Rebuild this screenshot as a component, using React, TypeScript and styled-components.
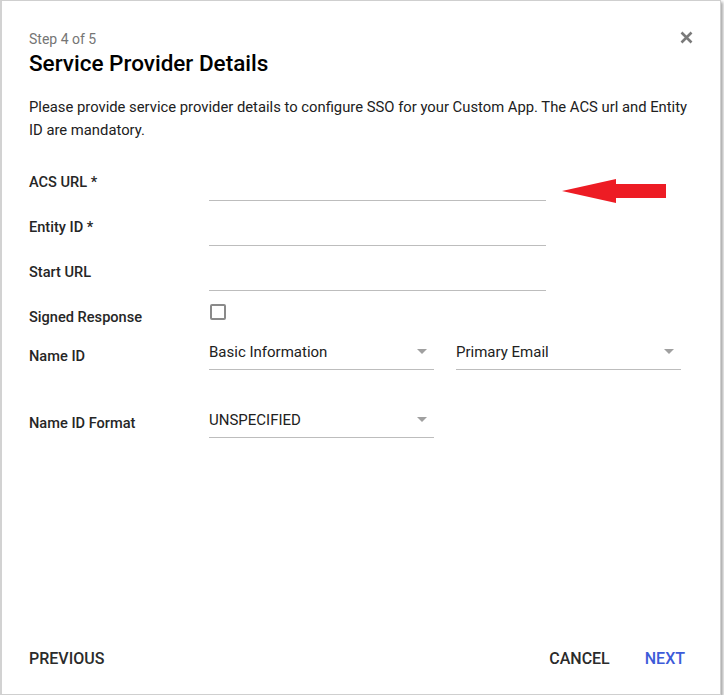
import React from 'react';
import styled, { createGlobalStyle } from 'styled-components';

const GlobalStyle = createGlobalStyle`
  html, body {
    margin: 0;
    padding: 0;
    background: #ffffff;
  }
  body {
    font-family: Roboto, "Liberation Sans", Arial, sans-serif;
    color: #212121;
  }
`;

const Dialog = styled.div`
  position: relative;
  box-sizing: border-box;
  width: 721px;
  height: 695px;
  border: 1px solid #cfcfcf;
  border-left: 2px solid #d2d2d2;
  background: #ffffff;
  box-shadow: 2px 2px 3px rgba(0, 0, 0, 0.35);
  display: flex;
  flex-direction: column;
  padding: 28px 27px 0 27px;
`;

const Header = styled.div`
  display: flex;
  justify-content: space-between;
  align-items: flex-start;
`;

const Step = styled.div`
  font-size: 14px;
  line-height: 20px;
  color: #757575;
`;

const Title = styled.h1`
  margin: 0;
  font-size: 22.5px;
  line-height: 28px;
  font-weight: 500;
  color: #000000;
`;

const CloseButton = styled.button`
  border: 0;
  background: none;
  padding: 0;
  margin: 2px -1px 0 0;
  width: 14px;
  height: 14px;
  cursor: pointer;
  display: flex;
`;

const Description = styled.p`
  margin: 19px 0 0 0;
  font-size: 14.8px;
  line-height: 23px;
  color: #212121;
`;

const Form = styled.div`
  margin-top: 15px;
  display: flex;
  flex-direction: column;
`;

const Row = styled.div<{ $h: number }>`
  display: grid;
  grid-template-columns: 180px auto;
  align-items: end;
  height: ${(p) => p.$h}px;
`;

const Label = styled.label<{ $mb: number }>`
  font-size: 14.6px;
  line-height: 20px;
  font-weight: 500;
  color: #262626;
  margin-bottom: ${(p) => p.$mb}px;
`;

const TextInput = styled.input`
  box-sizing: border-box;
  width: 337px;
  height: 32px;
  border: 0;
  border-bottom: 1px solid #bdbdbd;
  outline: none;
  font: inherit;
  font-size: 15px;
  padding: 0;
  margin-bottom: 1px;
  background: transparent;
`;

const Checkbox = styled.span`
  box-sizing: border-box;
  width: 16px;
  height: 16px;
  border: 2px solid #8a8a8a;
  border-radius: 2px;
  margin-bottom: 12px;
  margin-left: 1px;
`;

const Selects = styled.div`
  display: flex;
  gap: 22px;
`;

const Select = styled.div`
  box-sizing: border-box;
  width: 225px;
  display: flex;
  align-items: center;
  justify-content: space-between;
  padding: 0 7px 7px 0;
  border-bottom: 1px solid #bdbdbd;
  margin-bottom: 1px;
  font-size: 15px;
  line-height: 20px;
  color: #212121;
`;

const Caret = styled.span`
  width: 0;
  height: 0;
  margin-top: -1px;
  border-left: 5px solid transparent;
  border-right: 5px solid transparent;
  border-top: 5px solid #a0a0a0;
`;

const Footer = styled.div`
  margin-top: auto;
  display: flex;
  align-items: center;
  justify-content: space-between;
  padding: 0 8px 25px 0;
`;

const Actions = styled.div`
  display: flex;
  gap: 35px;
`;

const TextButton = styled.button<{ $primary?: boolean }>`
  border: 0;
  background: none;
  padding: 0;
  font-family: Roboto, "Liberation Sans", Arial, sans-serif;
  font-size: 16px;
  line-height: 20px;
  font-weight: 500;
  text-transform: uppercase;
  color: ${(p) => (p.$primary ? '#3d5bd9' : '#2b2b2b')};
  cursor: pointer;
`;

const Annotation = styled.svg`
  position: absolute;
  left: 558px;
  top: 177px;
`;

const selectRow = (label: string, mb: number, h: number, values: string[]) => (
  <Row $h={h}>
    <Label $mb={mb}>{label}</Label>
    <Selects>
      {values.map((v) => (
        <Select key={v}>
          <span>{v}</span>
          <Caret />
        </Select>
      ))}
    </Selects>
  </Row>
);

const App: React.FC = () => (
  <>
    <GlobalStyle />
    <Dialog>
      <Header>
        <div>
          <Step>Step 4 of 5</Step>
          <Title>Service Provider Details</Title>
        </div>
        <CloseButton aria-label="close">
          <svg width="13" height="13" viewBox="0 0 13 13">
            <path d="M1.5 1.5L11.5 11.5M11.5 1.5L1.5 11.5" stroke="#7a7a7a" strokeWidth="2.6" />
          </svg>
        </CloseButton>
      </Header>
      <Description>
        Please provide service provider details to configure SSO for your Custom App. The ACS url and Entity ID are
        mandatory.
      </Description>
      <Form>
        <Row $h={45}>
          <Label $mb={10}>ACS URL *</Label>
          <TextInput />
        </Row>
        <Row $h={45}>
          <Label $mb={10}>Entity ID *</Label>
          <TextInput />
        </Row>
        <Row $h={45}>
          <Label $mb={10}>Start URL</Label>
          <TextInput />
        </Row>
        <Row $h={40}>
          <Label $mb={5}>Signed Response</Label>
          <Checkbox />
        </Row>
        {selectRow('Name ID', 5, 39, ['Basic Information', 'Primary Email'])}
        {selectRow('Name ID Format', 6, 68, ['UNSPECIFIED'])}
      </Form>
      <Footer>
        <TextButton>Previous</TextButton>
        <Actions>
          <TextButton>Cancel</TextButton>
          <TextButton $primary>Next</TextButton>
        </Actions>
      </Footer>
      <Annotation width="108" height="28" viewBox="0 0 108 28">
        <polygon points="2,13 56,1 56,6 106,6 106,20 56,20 56,25" fill="#ed1c24" />
      </Annotation>
    </Dialog>
  </>
);

export default App;
